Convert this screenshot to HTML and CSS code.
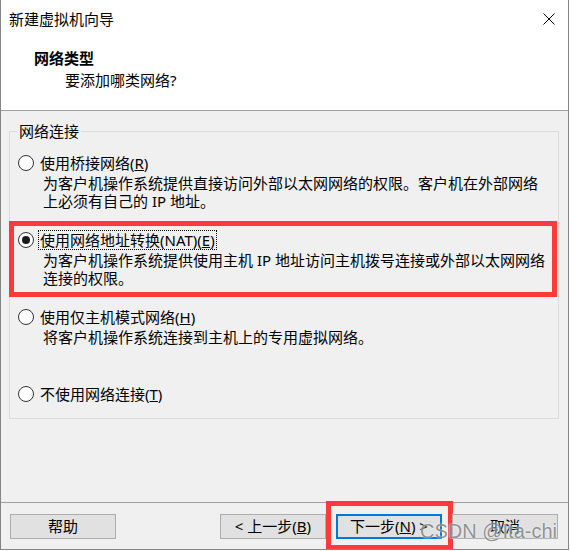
FILE: index.html
```html
<!DOCTYPE html>
<html lang="zh-CN">
<head>
<meta charset="utf-8">
<title>新建虚拟机向导</title>
<link rel="stylesheet" href="styles.css">
</head>
<body>
<div class="window">
  <div class="titlebar">
    <span class="title">新建虚拟机向导</span>
    <svg class="close" width="12" height="12" viewBox="0 0 12 12"><path d="M0.5 0.5 L11.5 11.5 M11.5 0.5 L0.5 11.5" stroke="#000" stroke-width="1" fill="none"/></svg>
  </div>
  <div class="header">
    <div class="h-title">网络类型</div>
    <div class="h-sub">要添加哪类网络?</div>
  </div>
  <div class="body">
    <fieldset class="group">
      <legend class="legend">网络连接</legend>
      <div class="option first">
        <div class="opt-row"><span class="radio"></span><span class="label">使用桥接网络(<u>R</u>)</span></div>
        <div class="desc">为客户机操作系统提供直接访问外部以太网网络的权限。客户机在外部网络<br>上必须有自己的 IP 地址。</div>
      </div>
      <div class="option marked">
        <div class="opt-row"><span class="radio checked"></span><span class="label focus">使用网络地址转换(NAT)(<u>E</u>)</span></div>
        <div class="desc">为客户机操作系统提供使用主机 IP 地址访问主机拨号连接或外部以太网网络<br>连接的权限。</div>
      </div>
      <div class="option">
        <div class="opt-row"><span class="radio"></span><span class="label">使用仅主机模式网络(<u>H</u>)</span></div>
        <div class="desc">将客户机操作系统连接到主机上的专用虚拟网络。</div>
      </div>
      <div class="option last">
        <div class="opt-row"><span class="radio"></span><span class="label">不使用网络连接(<u>T</u>)</span></div>
      </div>
    </fieldset>
  </div>
  <div class="footer">
    <button class="btn">帮助</button>
    <div class="nav">
      <button class="btn">&lt; 上一步(<u>B</u>)</button>
      <button class="btn primary marked-btn">下一步(<u>N</u>) &gt;</button>
      <button class="btn">取消</button>
    </div>
  </div>
  <div class="watermark">CSDN @Ita-chi</div>
</div>
</body>
</html>
```

FILE: styles.css
```css
html, body {
  margin: 0;
  padding: 0;
  background: #ffffff;
}

body {
  font-family: "Noto Sans", "Noto Sans CJK SC", sans-serif;
  font-size: 15px;
  color: #000;
}

.window {
  position: relative;
  width: 569px;
  height: 550px;
  box-sizing: border-box;
  border-left: 1px solid #858585;
  border-right: 1px solid #858585;
  border-bottom: 1px solid #858585;
  display: flex;
  flex-direction: column;
  background: #ffffff;
  overflow: hidden;
}

.titlebar {
  height: 38px;
  flex: none;
  display: flex;
  align-items: center;
  justify-content: space-between;
  padding: 0 13px 0 8px;
  line-height: 38px;
}

.close {
  display: block;
}

.header {
  height: 72px;
  flex: none;
  box-sizing: border-box;
  padding: 10px 0 0 33px;
}

.h-title {
  font-weight: bold;
  line-height: 20px;
}

.h-sub {
  margin-top: 2px;
  padding-left: 31px;
  line-height: 20px;
}

.body {
  flex: 1;
  background: #f0f0f0;
  border-top: 1px solid #a0a0a0;
  display: flex;
  flex-direction: column;
}

.group {
  margin: 10px 9px 0 8px;
  padding: 0 0 14px 0;
  min-width: 0;
  border: 1px solid #dcdcdc;
}

.legend {
  margin-left: 7px;
  padding: 0 2px;
  line-height: 20px;
}

.option {
  position: relative;
  padding-left: 8px;
  margin-top: 20px;
}

.option.first {
  margin-top: 12px;
}

.option.last {
  margin-top: 38px;
}

.option.marked::after {
  content: "";
  position: absolute;
  left: -1px;
  right: 1px;
  top: -9px;
  bottom: -10px;
  border: 5px solid #fc3a3c;
  pointer-events: none;
}

.opt-row {
  display: flex;
  align-items: center;
  height: 20px;
  line-height: 20px;
}

.radio {
  width: 16px;
  height: 16px;
  box-sizing: border-box;
  border: 1px solid #333333;
  border-radius: 50%;
  background: #ffffff;
  display: flex;
  align-items: center;
  justify-content: center;
  flex: none;
  margin-right: 4px;
}

.radio.checked::before {
  content: "";
  width: 8px;
  height: 8px;
  border-radius: 50%;
  background: #1a1a1a;
}

.label {
  padding: 0 2px;
  white-space: nowrap;
}

.label.focus {
  outline: 1px dotted #000;
  outline-offset: -1px;
}

.desc {
  margin-top: 1px;
  padding-left: 25px;
  line-height: 18px;
  white-space: nowrap;
}

.footer {
  height: 47px;
  flex: none;
  box-sizing: border-box;
  background: #f0f0f0;
  border-top: 1px solid #a0a0a0;
  display: flex;
  justify-content: space-between;
  align-items: flex-start;
  padding: 11px 10px 0 9px;
}

.nav {
  display: flex;
  gap: 10px;
}

.btn {
  position: relative;
  width: 106px;
  height: 25px;
  box-sizing: border-box;
  margin: 0;
  padding: 0;
  border: 1px solid #adadad;
  background: #e1e1e1;
  font-family: "Noto Sans", "Noto Sans CJK SC", sans-serif;
  font-size: 15px;
  line-height: 21px;
  color: #000;
  white-space: nowrap;
}

.btn.primary {
  border: 2px solid #0078d7;
}

.marked-btn::after {
  content: "";
  position: absolute;
  left: -12px;
  right: -13px;
  top: -15px;
  bottom: -13px;
  border: 5px solid #fc3a3c;
  pointer-events: none;
}

.watermark {
  position: absolute;
  right: 11px;
  bottom: 8px;
  font-family: "Liberation Sans", Arial, sans-serif;
  font-size: 20px;
  line-height: 20px;
  color: rgba(120, 120, 120, 0.8);
  text-shadow: 0 0 2px rgba(255, 255, 255, 0.9);
  white-space: nowrap;
  pointer-events: none;
}
```
